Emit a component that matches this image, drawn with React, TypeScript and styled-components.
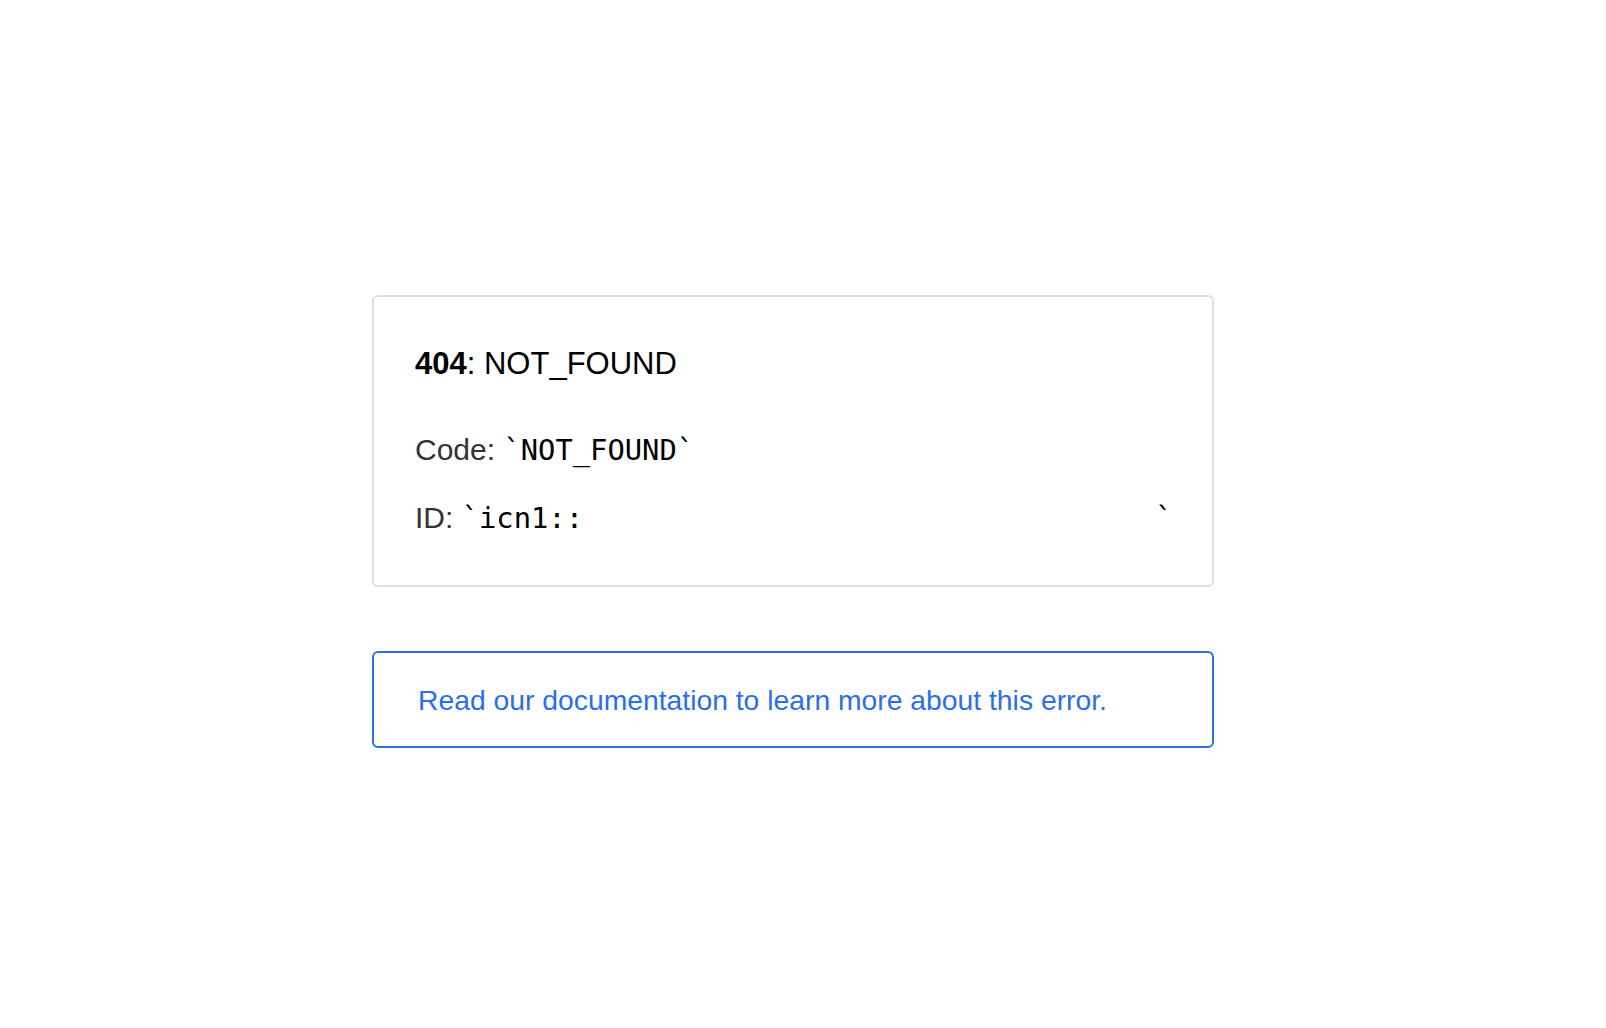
import React from "react";
import styled, { createGlobalStyle } from "styled-components";

const GlobalStyle = createGlobalStyle`
  html, body {
    margin: 0;
    padding: 0;
    background: #ffffff;
  }
  body {
    font-family: "Liberation Sans", Arial, Helvetica, sans-serif;
    -webkit-font-smoothing: antialiased;
  }
`;

const Page = styled.main`
  min-height: 1028px;
  display: flex;
  flex-direction: column;
  align-items: center;
  padding: 295px 20px 0 0;
  box-sizing: border-box;
`;

const ErrorCard = styled.section`
  width: 842px;
  box-sizing: border-box;
  border: 2px solid #dedede;
  border-radius: 6px;
  padding: 46px 41px 46px 41px;
  display: flex;
  flex-direction: column;
`;

const Heading = styled.h1`
  margin: 0;
  font-size: 31px;
  line-height: 42px;
  font-weight: 400;
  color: #000;
`;

const Status = styled.strong`
  font-weight: 700;
`;

const Detail = styled.p<{ $gap: number }>`
  margin: ${(p) => p.$gap}px 0 0 0;
  font-size: 30px;
  line-height: 42px;
  color: #333;
  white-space: pre;
`;

const Mono = styled.code`
  font-family: "DejaVu Sans Mono", "Liberation Mono", monospace;
  font-size: 28.8px;
  color: #000;
`;

const DocsCard = styled.a`
  display: block;
  width: 842px;
  box-sizing: border-box;
  margin: 64px 0 0 0;
  border: 2px solid #2d6ee8;
  border-radius: 6px;
  padding: 26px 42px 25px 44px;
  font-size: 28.3px;
  line-height: 42px;
  color: #2d6ee8;
  text-decoration: none;
`;

export default function App() {
  const idPad = " ".repeat(33);
  return (
    <>
      <GlobalStyle />
      <Page>
        <ErrorCard>
          <Heading>
            <Status>404</Status>: NOT_FOUND
          </Heading>
          <Detail $gap={44}>
            Code: <Mono>`NOT_FOUND`</Mono>
          </Detail>
          <Detail $gap={26}>
            ID: <Mono>{"`icn1::" + idPad + "`"}</Mono>
          </Detail>
        </ErrorCard>
        <DocsCard href="#">
          Read our documentation to learn more about this error.
        </DocsCard>
      </Page>
    </>
  );
}
